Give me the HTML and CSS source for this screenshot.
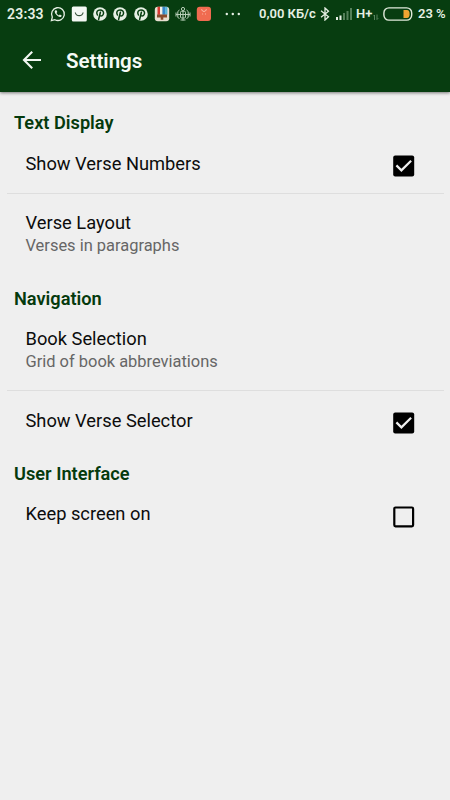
FILE: index.html
```html
<!DOCTYPE html>
<html lang="en">
<head>
<meta charset="utf-8">
<title>Settings</title>
<link rel="stylesheet" href="styles.css">
</head>
<body>
<svg class="defs" aria-hidden="true">
  <symbol id="pin" viewBox="0 0 16 16">
    <circle cx="8" cy="8" r="6.8" fill="#e6f0e4"/>
    <path d="M5.4 9C3.8 6.1 5.4 3.9 8 3.9c2.5 0 3.8 1.5 3.5 3.6-.3 2-1.800 3-3.700 2.100M8.400 6.300 6.600 13.500" fill="none" stroke="#073d10" stroke-width="1.5" stroke-linecap="round"/>
  </symbol>
  <symbol id="checked" viewBox="0 0 22 22">
    <rect x=".2" y=".4" width="21" height="21" rx="2" fill="#000"/>
    <path d="m3.400 10.400 5 5 9.700-9.700" fill="none" stroke="#efefef" stroke-width="2.200"/>
  </symbol>
  <symbol id="unchecked" viewBox="0 0 22 22">
    <rect x="1.300" y="1.500" width="18.800" height="18.800" rx="1.200" fill="none" stroke="#000" stroke-width="2.200"/>
  </symbol>
</svg>

<header class="top">
  <div class="status">
    <span class="time">23:33</span>
    <div class="notifications">
      <svg viewBox="0 0 16 16"><path d="m1.400 14.600.9-3.500A6.400 6.400 0 1 1 4.900 13.700Z" fill="none" stroke="#e6f0e4" stroke-width="1.300"/><path d="M5.500 4.300c-2 1.200.3 4.500 2.500 6 1.800 1.200 3.300 1 3.700-.8L9.800 8.500l-.9 1C8 9 7 8 6.500 7l.8-.9-.8-1.900Z" fill="#e6f0e4"/></svg>
      <svg viewBox="0 0 16 16"><rect x=".8" y=".5" width="15" height="15" rx="1.500" fill="#f4f8f4"/><path d="M4.300 6.500c.8 4.200 7 4.200 7.800 0" fill="none" stroke="#39543d" stroke-width="1.200"/></svg>
      <svg><use href="#pin"/></svg>
      <svg><use href="#pin"/></svg>
      <svg><use href="#pin"/></svg>
      <svg viewBox="0 0 16 16"><rect x=".8" y=".8" width="14.400" height="14.400" rx="3" fill="#e8dfd0"/><path d="M3.500.8H6v8H3.500z" fill="#d93a32"/><path d="M6 .8h2.400v7H6z" fill="#f3efe8"/><path d="M8.400.8h2.700v8H8.400z" fill="#3786c8"/><path d="M11.100.8h2.300v8h-2.300z" fill="#55b5dc"/><path d="M3 8.500h10v3H9.300v2.300H6.700v-2.300H3z" fill="#8a4c2c"/></svg>
      <svg viewBox="0 0 16 16" fill="none" stroke="#b8cfb8" stroke-width="1"><circle cx="8" cy="3" r="1.600"/><rect x="5.500" y="5.300" width="5" height="6.700" rx="1"/><path d="M4.500 4 2.800 5.500v6l1.700 1M11.500 4l1.700 1.500v6l-1.700 1M1 6.500v4M15 6.500v4M1 8.500h14M8 5v9.500M5.500 14h5"/></svg>
      <svg viewBox="0 0 16 16"><rect x=".8" y=".8" width="14.200" height="14.200" rx="3" fill="#f06b50"/><path d="M5.700 3.300c.3 2.800 4.300 2.800 4.600 0M6.300 8h.8M9 8h.8" fill="none" stroke="#ffc9b8" stroke-width="1"/></svg>
    </div>
    <svg class="more" viewBox="0 0 16 4" fill="#e6f0e4"><circle cx="1.800" cy="2" r="1.200"/><circle cx="7.800" cy="2" r="1.200"/><circle cx="13.800" cy="2" r="1.200"/></svg>
    <span class="speed">0,00 КБ/с</span>
    <svg class="bluetooth" viewBox="0 0 10 14"><path d="m1 3.800 7.500 6L5 13V1l3.500 3.200L1 10.200" fill="none" stroke="#e6f0e4" stroke-width="1.300"/></svg>
    <svg class="signal" viewBox="0 0 18 12"><path d="M1 9h2v3H1zM4.500 7.500h2V12h-2z" fill="#e6f0e4"/><path d="M8 5h2v7H8zM11.500 3h2v9h-2zM15 0h2v12h-2z" fill="#55805a"/></svg>
    <span class="network">H+</span>
    <svg class="traffic" viewBox="0 0 6 6"><path d="M1.500 6V1L.4 2.200M4 .5V5.500l1.200-1.200" fill="none" stroke="#6f9472" stroke-width=".8"/></svg>
    <svg class="battery" viewBox="0 0 30 14"><rect x=".9" y=".9" width="27.800" height="12.200" rx="5" fill="none" stroke="#e1eadb" stroke-width="1.400"/><path d="M20.500 3H24q2.600 0 2.600 4T24 11h-3.500z" fill="#f0a431"/></svg>
    <span class="percent">23 %</span>
  </div>
  <div class="appbar">
    <svg class="back" viewBox="0 0 20 20"><path d="M19 10H2.300M10.200 1.800 2 10l8.200 8.200" fill="none" stroke="#f2f7f2" stroke-width="2.100"/></svg>
    <h1>Settings</h1>
  </div>
</header>

<main>
  <h2>Text Display</h2>
  <div class="row divided">
    <div class="label">Show Verse Numbers</div>
    <svg class="check"><use href="#checked"/></svg>
  </div>
  <div class="row detailed">
    <div>
      <div class="label">Verse Layout</div>
      <div class="summary">Verses in paragraphs</div>
    </div>
  </div>

  <h2>Navigation</h2>
  <div class="row detailed divided">
    <div>
      <div class="label">Book Selection</div>
      <div class="summary">Grid of book abbreviations</div>
    </div>
  </div>
  <div class="row last">
    <div class="label">Show Verse Selector</div>
    <svg class="check"><use href="#checked"/></svg>
  </div>

  <h2>User Interface</h2>
  <div class="row screen">
    <div class="label">Keep screen on</div>
    <svg class="check"><use href="#unchecked"/></svg>
  </div>
</main>
</body>
</html>
```
FILE: styles.css
```css
* { box-sizing: border-box; }

body {
  margin: 0;
  min-height: 800px;
  background: #efefef;
  color: #0c0c0c;
  font-family: Roboto, "Liberation Sans", sans-serif;
}

svg { display: block; flex: none; }
.defs { display: none; }

.top {
  height: 92px;
  background: #073d10;
  color: #f6faf6;
  box-shadow: 0 1px 3px rgba(0, 0, 0, .5);
}

.status {
  display: flex;
  align-items: center;
  height: 28px;
  padding-left: 7px;
  color: #e6f0e4;
  font-size: 13px;
  font-weight: 600;
  line-height: 28px;
  white-space: nowrap;
}

.time { width: 43px; font-size: 14px; letter-spacing: .2px; }
.notifications { display: flex; gap: 4.8px; }
.notifications svg { width: 16px; height: 16px; }
.more { width: 16px; height: 4px; margin-left: 13.400px; }
.speed { width: 61px; margin-left: 18px; }
.bluetooth { width: 10px; height: 14px; }
.signal { width: 18px; height: 12px; margin-left: 5px; }
.network { width: 17px; margin-left: 3px; }
.traffic { width: 6px; height: 6px; margin-top: 5px; }
.battery { width: 30px; height: 14px; margin-left: 4px; }
.percent { margin-left: 5px; }

.appbar {
  display: flex;
  align-items: center;
  height: 64px;
  padding-left: 22px;
}

.back { width: 20px; height: 20px; }

h1 {
  margin: 1px 0 0 24px;
  font-size: 20.500px;
  font-weight: 600;
  line-height: 28px;
}

main { padding-top: 19px; }

h2 {
  margin: 0 0 0 14px;
  color: #053a0d;
  font-size: 18.200px;
  font-weight: 600;
  line-height: 24px;
}

.row {
  display: flex;
  justify-content: space-between;
  align-items: flex-start;
  height: 58px;
  margin: 0 6px 0 7px;
  padding: 17px 29px 0 18.500px;
}

.divided { height: 59px; border-bottom: 1px solid #dedede; }
.detailed { height: 93px; }
.detailed.divided { height: 80px; padding-top: 16px; }
.last { height: 71px; padding-top: 18px; }
.screen { padding-top: 16px; }

.label { font-size: 18.300px; line-height: 24px; }
.summary { color: #666; font-size: 16.450px; line-height: 21px; }
.check { width: 22px; height: 22px; margin-top: 3px; }
.screen .check { margin-top: 4px; }
```
